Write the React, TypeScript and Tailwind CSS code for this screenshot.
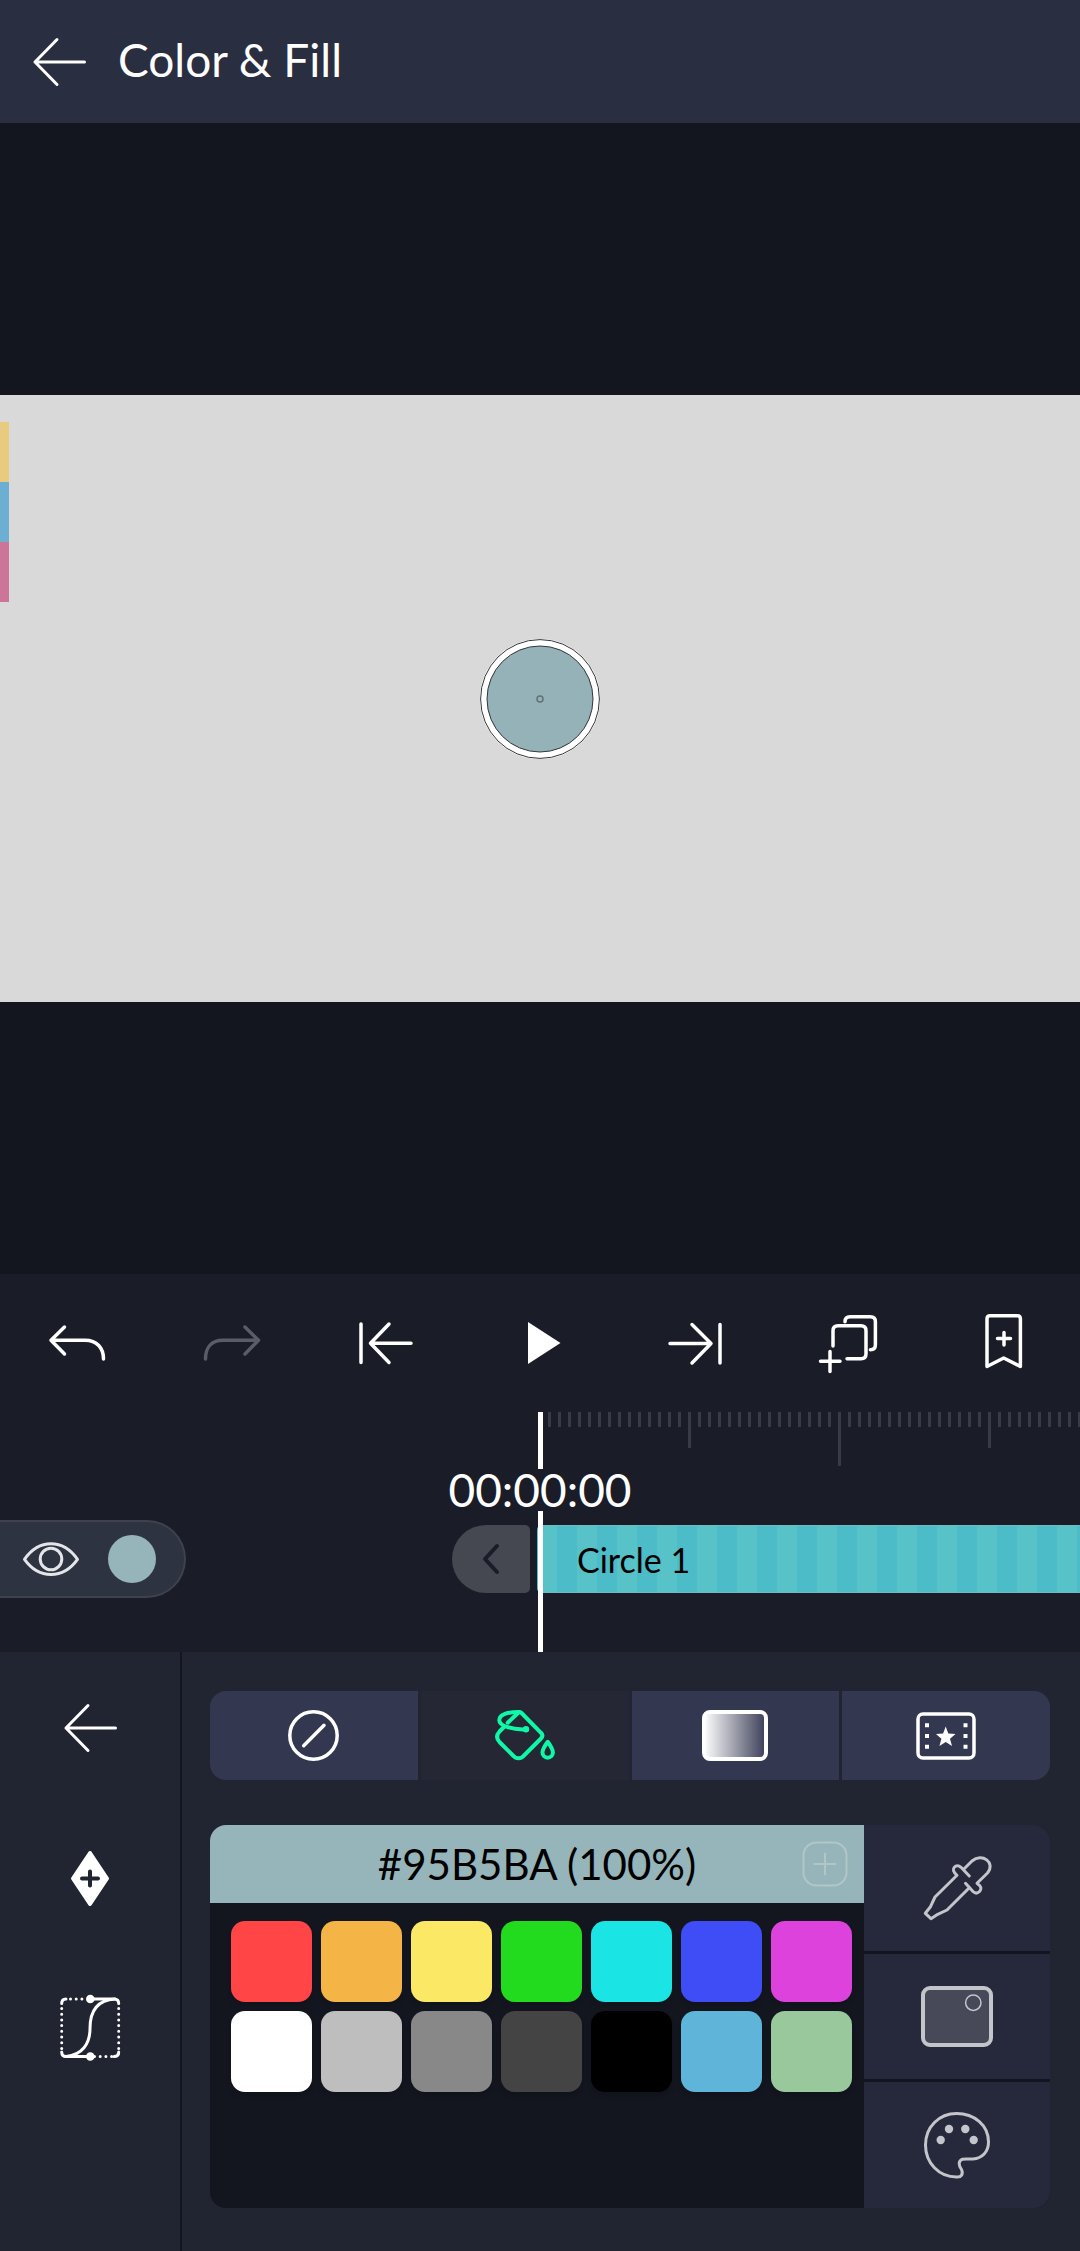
import type { ReactNode } from "react";

const stroke = {
  fill: "none",
  stroke: "currentColor",
  strokeLinecap: "round" as const,
  strokeLinejoin: "round" as const,
};

function Icon({ w, h, sw = 3, children }: { w: number; h: number; sw?: number; children: ReactNode }) {
  return (
    <svg width={w} height={h} viewBox={`0 0 ${w} ${h}`} {...stroke} strokeWidth={sw} className="shrink-0 overflow-visible" aria-hidden="true">
      {children}
    </svg>
  );
}

const BackIcon = () => (
  <Icon w={53} h={48} sw={3}>
    <path d="M24 1.500 2 24l22 22.500M2 24h49.500" />
  </Icon>
);

const transport: { label: string; dim?: boolean; icon: ReactNode }[] = [
  { label: "Undo", icon: <path d="M17.500 14 4 27.300 17.500 41M4 27.300H38C50 27.300 56.500 35 56.500 46" /> },
  { label: "Redo", dim: true, icon: <path d="M44 14 57.500 27.300 44 41M57.500 27.300H22C10 27.300 4.500 35 4.500 46" /> },
  { label: "Go to start", icon: <path d="M5 11v38.500M33 11 14.500 30.300 33 49.500M14.500 30.300H55" /> },
  { label: "Play", icon: <path d="M18 9 50.500 30 18 51Z" fill="currentColor" stroke="none" /> },
  { label: "Go to end", icon: <path d="M56 11.500v38.500M28 11.500 47 30.500 28 50M47 30.500H6" /> },
  {
    label: "Duplicate layer",
    icon: (
      <path d="M14 33V17.700q0-5 5-5H42q5 0 5 5V40.700q0 5-5 5H28M26 8.700q0-5 5-5H51.400q5 0 5 5V31.700q0 5-5 5M1.500 48.300H21M11 38.500V58.500" />
    ),
  },
  {
    label: "Add bookmark",
    icon: <path d="M14 53.500V5.700q0-3 3-3H44.400q3 0 3 3V53.500L30.700 45ZM24.500 25.500H37.500M31 19.500V32" />,
  },
];

const tabs: { label: string; active?: boolean; icon: ReactNode }[] = [
  {
    label: "No fill",
    icon: (
      <Icon w={51} h={51} sw={3.5}>
        <circle cx="25.500" cy="25.500" r="23.700" />
        <path d="M15.700 35.700 36 15.300" />
      </Icon>
    ),
  },
  {
    label: "Solid color",
    active: true,
    icon: (
      <Icon w={60} h={51} sw={4}>
        <path d="M9 17 4.500 21.500C1.300 25 1.300 28.500 4.500 32L18.500 46C21 49 26 49 28.500 46L46 28.500C47.800 26.500 47.800 24.500 46 22.800L26.500 3C25.500 2 24 2 23 3L12.700 12.700" />
        <path d="M24.300 2C14 1.800 4.500 4 4.300 10C4 16 18 20 31 19.300" />
        <circle cx="31" cy="19.300" r="3.200" fill="currentColor" stroke="none" />
        <path d="M52.700 31.800C50 35.500 47.500 39 47.500 42.500A5.200 5.200 0 0 0 57.900 42.500C57.900 39 55.400 35.500 52.700 31.800Z" />
      </Icon>
    ),
  },
  {
    label: "Gradient",
    icon: (
      <Icon w={66} h={51} sw={4}>
        <defs>
          <linearGradient id="fade">
            <stop offset="0" stopColor="#fff" />
            <stop offset="1" stopColor="#3a3d57" />
          </linearGradient>
        </defs>
        <rect x="2" y="2" width="62" height="47" rx="6" fill="url(#fade)" />
      </Icon>
    ),
  },
  {
    label: "Media",
    icon: (
      <Icon w={60} h={48} sw={3.5}>
        <rect x="2" y="2" width="56" height="44" rx="5" />
        <g fill="currentColor" stroke="none">
          <path d="M9 11.300h4v4H9zM9 22h4v4H9zM9 32.700h4v4H9zM47.500 11.300h4v4h-4zM47.500 22h4v4h-4zM47.500 32.700h4v4h-4z" />
          <path d="M29.700 14.500 32.300 21.500 39.500 22 34 26.700 36 34 29.700 30 23.400 34 25.400 26.700 20 22 27.100 21.500Z" />
        </g>
      </Icon>
    ),
  },
];

const swatches = [
  { name: "Red", bg: "bg-[#ff4545]" },
  { name: "Orange", bg: "bg-[#f5b446]" },
  { name: "Yellow", bg: "bg-[#fbe965]" },
  { name: "Green", bg: "bg-[#22db1e]" },
  { name: "Cyan", bg: "bg-[#1ae4e4]" },
  { name: "Blue", bg: "bg-[#3e4df5]" },
  { name: "Magenta", bg: "bg-[#dd42dd]" },
  { name: "White", bg: "bg-white" },
  { name: "Light gray", bg: "bg-[#bebebe]" },
  { name: "Gray", bg: "bg-[#888888]" },
  { name: "Dark gray", bg: "bg-[#444444]" },
  { name: "Black", bg: "bg-black" },
  { name: "Sky", bg: "bg-[#5eb5d9]" },
  { name: "Sage", bg: "bg-[#98c89c]" },
];

const ticks = Array.from({ length: 54 }, (_, i) => i + 1);

function Header() {
  return (
    <header className="flex h-[123px] items-center gap-8 bg-[#292e40] pl-[33px]">
      <button aria-label="Back">
        <BackIcon />
      </button>
      <h1 className="pb-1 text-[46px] leading-[56px]">Color &amp; Fill</h1>
    </header>
  );
}

function Preview() {
  return (
    <main className="flex flex-1 items-center bg-[#13161f]">
      <div className="relative flex aspect-video w-full items-center justify-center bg-[#d9d9d9]">
        <div className="absolute top-[27px] left-0 w-[9px]">
          <div className="h-[60px] bg-[#e9cb80]" />
          <div className="h-[60px] bg-[#6cafd3]" />
          <div className="h-[60px] bg-[#cd7598]" />
        </div>
        <svg width="120" height="120" viewBox="0 0 120 120" fill="none" aria-label="Circle 1" role="img">
          <circle cx="60" cy="60" r="56.500" fill="#95b2b8" stroke="#fff" strokeWidth="7" />
          <circle cx="60" cy="60" r="59.400" stroke="#33373c" />
          <circle cx="60" cy="60" r="53" stroke="#33373c" />
          <circle cx="60" cy="60" r="3" stroke="#5f7377" strokeWidth="1.500" />
        </svg>
      </div>
    </main>
  );
}

function Timeline() {
  return (
    <section className="relative overflow-hidden pb-[54px]" aria-label="Timeline">
      <div className="absolute top-0 left-1/2 z-10 -ml-[2px] h-[57px] w-[5px] bg-white" />
      <div className="absolute top-[99px] bottom-0 left-1/2 z-10 -ml-[2px] w-[5px] bg-white" />
      <div className="ml-[50%] flex h-[57px] items-start gap-[7px] pl-2">
        {ticks.map((n) => (
          <div
            key={n}
            className={`w-[3px] shrink-0 bg-[#383a45] ${n % 30 === 0 ? "h-[54px]" : n % 15 === 0 ? "h-9" : "h-[15px]"}`}
          />
        ))}
      </div>
      <div className="text-center text-[46px] leading-[42px]">00:00:00</div>
      <div className="mt-[9px] flex h-[78px] items-center">
        <div className="flex w-[calc(50%-3px)] items-center justify-between pr-[7px]">
          <div className="flex h-[78px] w-[186px] items-center justify-between rounded-r-full border-2 border-l-0 border-[#3f424e] bg-[#2d3340] pr-[28px] pl-[23px] text-[#e4e5e9]">
            <button aria-label="Toggle visibility">
              <Icon w={56} h={34} sw={3}>
                <path d="M1.500 17.300C16 -3.500 40 -3.500 54.500 17.300C40 37.500 16 37.500 1.500 17.300Z" />
                <circle cx="28" cy="17" r="10.800" />
              </Icon>
            </button>
            <button aria-label="Layer color" className="size-12 rounded-full bg-[#95b5ba]" />
          </div>
          <button
            aria-label="Previous layer edge"
            className="flex h-[68px] w-[78px] items-center justify-center rounded-l-[34px] rounded-r-[5px] bg-[#454751] text-[#1a1c27]"
          >
            <Icon w={16} h={30} sw={4}>
              <path d="M14 2 2 15 14 28" />
            </Icon>
          </button>
        </div>
        <div className="flex h-[68px] flex-1 items-center rounded-l-[5px] border-y border-[#6fbcc0] bg-[repeating-linear-gradient(90deg,#58c2c9_0_20px,#4bbcc8_20px_40px)] pl-10 text-[34px] text-black">
          Circle 1
        </div>
      </div>
    </section>
  );
}

function ColorPanel() {
  return (
    <section className="flex bg-[#212431]" aria-label="Fill settings">
      <nav className="flex w-[182px] flex-col border-r-2 border-[#13161f]">
        <button aria-label="Close panel" className="flex h-[152px] items-center justify-center">
          <BackIcon />
        </button>
        <button aria-label="Add keyframe" className="flex h-[148px] items-center justify-center">
          <Icon w={38} h={57} sw={4}>
            <path d="M19 3 36 28.500 19 54 2 28.500Z" fill="currentColor" />
            <path d="M11 28.500H27M19 21.500V35.500" stroke="#212431" />
          </Icon>
        </button>
        <button aria-label="Easing curve" className="flex h-[152px] items-center justify-center">
          <Icon w={60} h={66} sw={3}>
            <path d="M30 4H54Q58.700 4 58.700 8.500M30 61.500H6Q1.700 61.500 1.700 57M1.700 8.500Q1.700 4 6 4M58.700 57Q58.700 61.500 54 61.500" />
            <path d="M6 61.500C22 60 30 49 30 33.500C30 15 38 5 55 4" />
            <path d="M10.500 4H26M34.500 61.500H52M1.700 13.500V54M58.700 13.500V54" strokeDasharray="0 5.700" />
            <g fill="currentColor" stroke="none">
              <circle cx="30.300" cy="4" r="4.300" />
              <circle cx="30.300" cy="61.500" r="4.300" />
            </g>
          </Icon>
        </button>
      </nav>

      <div className="flex-1 pt-[39px] pr-[30px] pb-[43px] pl-7">
        <div role="tablist" className="grid h-[89px] grid-cols-4 gap-[3px] overflow-hidden rounded-2xl">
          {tabs.map((t) => (
            <button
              key={t.label}
              role="tab"
              aria-label={t.label}
              aria-selected={!!t.active}
              className={`flex items-center justify-center ${t.active ? "bg-[#252735] text-[#0ff8a7]" : "bg-[#343750]"}`}
            >
              {t.icon}
            </button>
          ))}
        </div>

        <div className="mt-[45px] flex h-[383px] overflow-hidden rounded-2xl bg-[#13161f]">
          <div className="flex-1">
            <div className="relative flex h-[78px] items-center justify-center bg-[#95b5ba]">
              <button className="text-[42px] leading-[56px] text-black">#95B5BA (100%)</button>
              <button aria-label="Save color" className="absolute right-4 text-[#b3c5c7]">
                <Icon w={46} h={46} sw={2}>
                  <rect x="1.500" y="1.500" width="43" height="43" rx="13" />
                  <path d="M12.500 23H33.500M23 12.500V33.500" />
                </Icon>
              </button>
            </div>
            <div className="grid grid-cols-7 gap-[9px] pt-[18px] pr-3 pl-[21px]">
              {swatches.map((s) => (
                <button key={s.name} aria-label={s.name} className={`aspect-square rounded-[14px] shadow-md ${s.bg}`} />
              ))}
            </div>
          </div>
          <div className="grid w-[186px] grid-rows-3 gap-[3px] text-[#c4c4cb]">
            <button aria-label="Eyedropper" className="flex items-center justify-center bg-[#26293b]">
              <Icon w={70} h={67} sw={3}>
                <path d="M41.700 15.300 50 7C60 -1.500 74 8.500 65.500 19L55 29.300C60 33 59.500 35 57.500 37.500C55 40 52.500 39 51 37.500L43.500 29.300" />
                <path d="M47.300 22 39 13.300C36.500 11 34 11.300 32.500 13C30.500 15 31 18 35 21.300L13 43 8.500 52.700 3.300 59.300 9 64.700 15.700 60.300 25 56 47.300 33.700" />
              </Icon>
            </button>
            <button aria-label="Color box" className="flex items-center justify-center bg-[#26293b]">
              <Icon w={72} h={61} sw={4}>
                <rect x="2" y="2" width="68" height="57" rx="7" fill="#474959" />
                <circle cx="52.300" cy="16.700" r="7.700" strokeWidth="1.500" />
              </Icon>
            </button>
            <button aria-label="Palettes" className="flex items-center justify-center bg-[#26293b]">
              <Icon w={66} h={66} sw={3}>
                <path d="M32.700 1.500C15 1.500 1.500 15 1.500 33C1.500 51 15 65 32.500 65C37.500 65.500 39.500 62 37.500 57.500C34.500 53 34 49 38.500 47.200C42 46.500 45 47.200 49 47C58 46.500 64.500 40 64.500 30C64.500 13 50 1.500 32.700 1.500Z" />
                <g fill="currentColor" stroke="none">
                  <circle cx="25" cy="17" r="4.200" />
                  <circle cx="41.300" cy="17" r="4.200" />
                  <circle cx="16.700" cy="28" r="4.200" />
                  <circle cx="49.700" cy="28" r="4.200" />
                </g>
              </Icon>
            </button>
          </div>
        </div>
      </div>
    </section>
  );
}

export default function App() {
  return (
    <div className="flex min-h-screen flex-col overflow-x-hidden bg-[#1a1c27] font-[Lato,sans-serif] text-white">
      <Header />
      <Preview />
      <div role="toolbar" aria-label="Transport" className="grid h-[138px] grid-cols-7">
        {transport.map((t) => (
          <button
            key={t.label}
            aria-label={t.label}
            disabled={t.dim}
            className={`flex items-center justify-center ${t.dim ? "text-[#5b5c67]" : ""}`}
          >
            <Icon w={60} h={60} sw={3.5}>
              {t.icon}
            </Icon>
          </button>
        ))}
      </div>
      <Timeline />
      <ColorPanel />
    </div>
  );
}
